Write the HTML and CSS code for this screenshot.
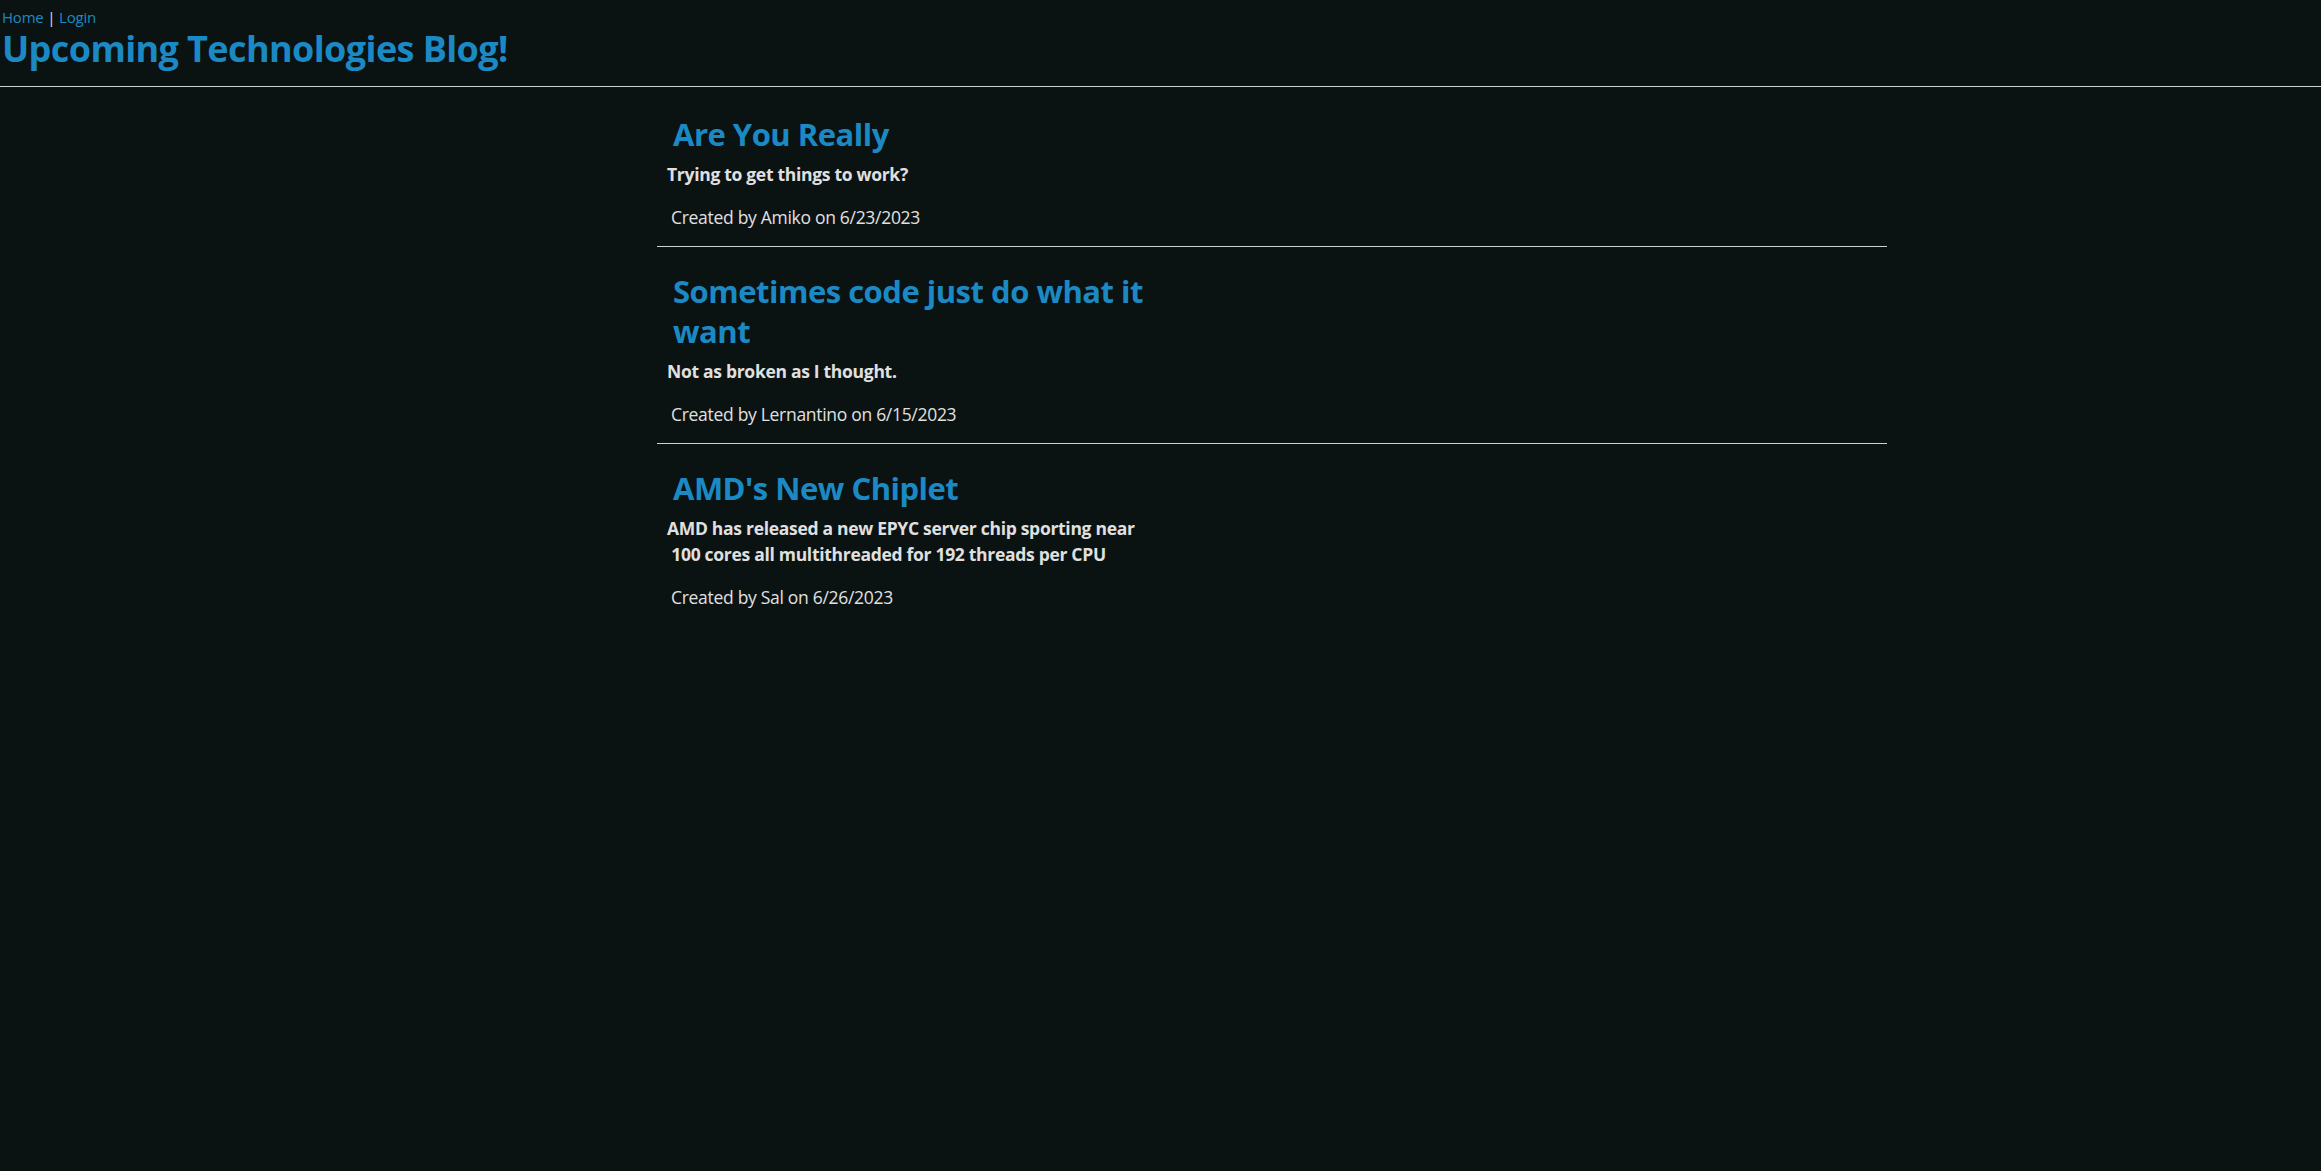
FILE: index.html
```html
<!DOCTYPE html>
<html lang="en">
<head>
<meta charset="utf-8">
<title>Upcoming Technologies Blog!</title>
<link rel="stylesheet" href="styles.css">
</head>
<body>
<header class="site-header">
  <nav class="nav"><a href="#">Home</a> | <a href="#">Login</a></nav>
  <h1 class="site-title">Upcoming Technologies Blog!</h1>
</header>
<main class="posts">
  <article class="post">
    <h2 class="post-title">Are You Really</h2>
    <p class="post-desc">Trying to get things to work?</p>
    <p class="post-meta">Created by Amiko on 6/23/2023</p>
  </article>
  <article class="post">
    <h2 class="post-title">Sometimes code just do what it want</h2>
    <p class="post-desc">Not as broken as I thought.</p>
    <p class="post-meta">Created by Lernantino on 6/15/2023</p>
  </article>
  <article class="post">
    <h2 class="post-title">AMD's New Chiplet</h2>
    <p class="post-desc">AMD has released a new EPYC server chip sporting near
 100 cores all multithreaded for 192 threads per CPU</p>
    <p class="post-meta">Created by Sal on 6/26/2023</p>
  </article>
</main>
</body>
</html>
```
FILE: styles.css
```css
html, body {
  margin: 0;
  padding: 0;
  background: #0b1212;
  color: #e0e0e0;
  font-family: "Open Sans", "Noto Sans", sans-serif;
}
body {
  min-height: 1171px;
}
a {
  color: #1b8ac4;
  text-decoration: none;
}
.site-header {
  padding: 9px 2px 0 2px;
  border-bottom: 1px solid #d0d0d0;
  height: 87px;
  box-sizing: border-box;
}
.nav {
  font-size: 15px;
  line-height: 16px;
  color: #e0e0e0;
  letter-spacing: -0.2px;
}
.site-title {
  margin: 2px 0 0 0;
  color: #1b8ac4;
  font-size: 36px;
  line-height: 44px;
  font-weight: 700;
  letter-spacing: -0.6px;
}
.posts {
  margin-left: 657px;
  width: 1230px;
  padding-top: 3px;
}
.post {
  border-bottom: 1px solid #d0d0d0;
  padding: 24px 0 15px 0;
}
.post:last-child {
  border-bottom: none;
}
.post-title {
  margin: 0 0 0 16px;
  max-width: 470px;
  color: #1b8ac4;
  font-size: 31px;
  line-height: 40px;
  font-weight: 700;
  letter-spacing: -0.5px;
}
.post-desc {
  margin: 7px 0 0 10px;
  font-size: 17.5px;
  line-height: 26px;
  font-weight: 700;
  white-space: pre-wrap;
  letter-spacing: -0.3px;
}
.post-meta {
  margin: 17px 0 0 14px;
  font-size: 17.5px;
  line-height: 27px;
  font-weight: 400;
  letter-spacing: -0.3px;
}
```
